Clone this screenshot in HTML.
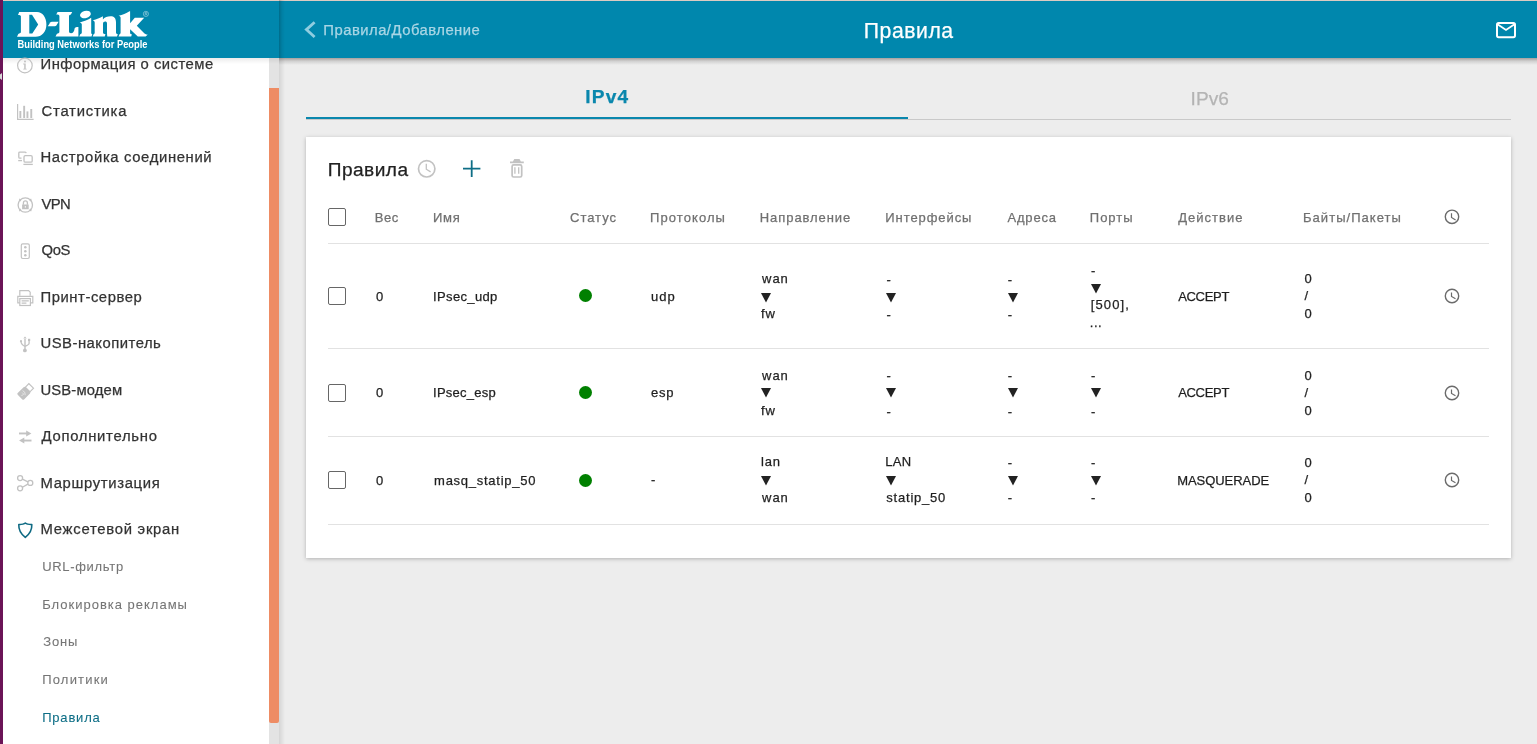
<!DOCTYPE html>
<html><head><meta charset="utf-8"><title>Правила</title>
<style>
html,body{margin:0;padding:0;}
body{width:1537px;height:744px;overflow:hidden;position:relative;background:#ededed;font-family:"Liberation Sans",sans-serif;}
.t{position:absolute;white-space:nowrap;line-height:1;-webkit-text-stroke:0.25px currentColor;}
.a{position:absolute;display:block;}
#purple{position:absolute;left:0;top:0;width:3px;height:744px;background:#6b1457;z-index:20;}
#notch{position:absolute;left:0;top:73px;width:2px;height:7px;background:#d9d9d9;clip-path:polygon(0 20%,100% 0,100% 100%,0 80%);z-index:21;}
#side{position:absolute;left:3px;top:0;width:276px;height:744px;background:#fff;}
#track{position:absolute;left:269px;top:58px;width:10px;height:686px;background:#e3e3e3;}
#thumb{position:absolute;left:269px;top:88px;width:10px;height:635px;background:#ee8c64;border-radius:0 0 2px 2px;}
#mainshadow{position:absolute;left:279px;top:58px;width:6px;height:686px;background:linear-gradient(to right,rgba(0,0,0,0.10),rgba(0,0,0,0));}
#hdr{position:absolute;left:3px;top:0;width:1534px;height:58px;background:#0087ad;z-index:10;}
#topline{position:absolute;left:3px;top:0;width:1534px;height:1px;background:#dccbc2;z-index:11;}
#hdrshadow{position:absolute;left:279px;top:0;width:6px;height:58px;background:linear-gradient(to right,rgba(0,0,0,0.2),rgba(0,0,0,0.06) 50%,rgba(0,0,0,0));z-index:11;}
#hdrbot{position:absolute;left:279px;top:58px;width:1258px;height:7px;background:linear-gradient(to bottom,rgba(40,22,16,0.36),rgba(0,0,0,0.12) 45%,rgba(0,0,0,0));z-index:9;}
#sidebot{position:absolute;left:3px;top:58px;width:276px;height:6px;background:linear-gradient(to bottom,rgba(0,0,0,0.08),rgba(0,0,0,0));z-index:9;}
#tabline{position:absolute;left:306px;top:119px;width:1205px;height:1px;background:#c9c9c9;}
#tabact{position:absolute;left:306px;top:117px;width:602px;height:2px;background:#0a87ad;}
#card{position:absolute;left:306px;top:137px;width:1205px;height:421px;background:#fff;box-shadow:0 1px 4px rgba(0,0,0,0.25);}
.hl{position:absolute;left:328px;width:1161px;height:1px;background:#e2e2e2;}
.cb{position:absolute;left:328px;width:16px;height:16px;border:1px solid #666;border-radius:2px;box-sizing:content-box;}
.dot{position:absolute;left:579px;width:13px;height:13px;border-radius:50%;background:#008000;}
</style></head><body>
<div id="side"></div>
<div id="track"></div>
<div id="thumb"></div>
<div id="mainshadow"></div>
<div id="hdr"></div>
<div id="topline"></div>
<div id="hdrshadow"></div>
<div id="hdrbot"></div>
<div id="sidebot"></div>
<div id="purple"></div>
<div id="notch"></div>
<div id="tabline"></div>
<div id="tabact"></div>
<div id="card"></div>
<div class="hl" style="top:243px"></div>
<div class="hl" style="top:348px"></div>
<div class="hl" style="top:436px"></div>
<div class="hl" style="top:524px"></div>
<div class="cb" style="top:208px"></div>
<div class="cb" style="top:287.0px"></div><div class="dot" style="top:289.40px"></div><svg class="a" style="left:1443px;top:286.9px" width="18" height="18" viewBox="0 0 18 18"><circle cx="9" cy="9" r="6.7" fill="none" stroke="#6b6b6b" stroke-width="1.4"/><path d="M8.5 5.4V9.4L12.5 11.8" fill="none" stroke="#6b6b6b" stroke-width="1.2"/></svg>
<div class="cb" style="top:384.0px"></div><div class="dot" style="top:385.80px"></div><svg class="a" style="left:1443px;top:383.9px" width="18" height="18" viewBox="0 0 18 18"><circle cx="9" cy="9" r="6.7" fill="none" stroke="#6b6b6b" stroke-width="1.4"/><path d="M8.5 5.4V9.4L12.5 11.8" fill="none" stroke="#6b6b6b" stroke-width="1.2"/></svg>
<div class="cb" style="top:471.0px"></div><div class="dot" style="top:473.90px"></div><svg class="a" style="left:1443px;top:471.0px" width="18" height="18" viewBox="0 0 18 18"><circle cx="9" cy="9" r="6.7" fill="none" stroke="#6b6b6b" stroke-width="1.4"/><path d="M8.5 5.4V9.4L12.5 11.8" fill="none" stroke="#6b6b6b" stroke-width="1.2"/></svg>
<svg class="a" style="left:761.0px;top:292.70px" width="11" height="11" viewBox="0 0 11 11"><path d="M0 0H10L5 9.6Z" fill="#222"/></svg>
<svg class="a" style="left:886.3px;top:292.70px" width="11" height="11" viewBox="0 0 11 11"><path d="M0 0H10L5 9.6Z" fill="#222"/></svg>
<svg class="a" style="left:1007.5px;top:292.70px" width="11" height="11" viewBox="0 0 11 11"><path d="M0 0H10L5 9.6Z" fill="#222"/></svg>
<svg class="a" style="left:1090.8px;top:283.93px" width="11" height="11" viewBox="0 0 11 11"><path d="M0 0H10L5 9.6Z" fill="#222"/></svg>
<svg class="a" style="left:761.0px;top:388.20px" width="11" height="11" viewBox="0 0 11 11"><path d="M0 0H10L5 9.6Z" fill="#222"/></svg>
<svg class="a" style="left:886.3px;top:388.20px" width="11" height="11" viewBox="0 0 11 11"><path d="M0 0H10L5 9.6Z" fill="#222"/></svg>
<svg class="a" style="left:1007.5px;top:388.20px" width="11" height="11" viewBox="0 0 11 11"><path d="M0 0H10L5 9.6Z" fill="#222"/></svg>
<svg class="a" style="left:1090.8px;top:388.20px" width="11" height="11" viewBox="0 0 11 11"><path d="M0 0H10L5 9.6Z" fill="#222"/></svg>
<svg class="a" style="left:761.0px;top:476.20px" width="11" height="11" viewBox="0 0 11 11"><path d="M0 0H10L5 9.6Z" fill="#222"/></svg>
<svg class="a" style="left:886.3px;top:476.20px" width="11" height="11" viewBox="0 0 11 11"><path d="M0 0H10L5 9.6Z" fill="#222"/></svg>
<svg class="a" style="left:1007.5px;top:476.20px" width="11" height="11" viewBox="0 0 11 11"><path d="M0 0H10L5 9.6Z" fill="#222"/></svg>
<svg class="a" style="left:1090.8px;top:476.20px" width="11" height="11" viewBox="0 0 11 11"><path d="M0 0H10L5 9.6Z" fill="#222"/></svg>
<svg class="a" style="left:0;top:0;z-index:13" width="1537" height="744" viewBox="0 0 1537 744">
<g fill="none" stroke="#c2c2c2" stroke-width="1.2">
  <circle cx="24.9" cy="65.5" r="7.3"/>
</g>
<g fill="#c2c2c2">
  <circle cx="25" cy="61.6" r="1.0"/>
  <path d="M23.2 63.6H25.7V68.7H26.7V69.6H23.2V68.7H24.2V64.5H23.2Z"/>
</g>
<g fill="none" stroke="#c2c2c2" stroke-width="1.2">
  <path d="M17.6 104V119.4H33.6"/>
</g>
<g fill="#c2c2c2">
  <rect x="19.4" y="111" width="1.9" height="7"/>
  <rect x="23.2" y="105.8" width="1.9" height="12.2"/>
  <rect x="26.5" y="111.4" width="1.9" height="6.6"/>
  <rect x="30.3" y="109" width="1.9" height="9"/>
</g>
<g fill="none" stroke="#c2c2c2" stroke-width="1.3">
  <path d="M21.5 158.2H19.8Q18.8 158.2 18.8 157.2V153Q18.8 152.2 19.8 152.2H25.2Q26 152.2 26.2 153.2"/>
  <path d="M18.2 160.6H22"/>
  <rect x="24.0" y="155.6" width="8.2" height="6.6" rx="1.3"/>
  <path d="M23.4 164.4H32.8"/>
</g>
<g fill="none" stroke="#c2c2c2" stroke-width="1.3">
  <circle cx="25.3" cy="205" r="7.2"/>
</g>
<g fill="#c2c2c2">
  <path d="M19.5 198.5L21.6 199.8L20.4 201.6L18.8 200.6Z"/>
  <path d="M31.1 198.5L29 199.8L30.2 201.6L31.8 200.6Z"/>
  <path d="M19.5 211.5L21.6 210.2L20.4 208.4L18.8 209.4Z"/>
  <path d="M31.1 211.5L29 210.2L30.2 208.4L31.8 209.4Z"/>
  <path d="M22.1 204.6H28.7V209.2H22.1Z M24.8 206.2V207.4H26V206.2Z" fill-rule="evenodd"/>
</g>
<path d="M23.4 204.8V203Q23.4 200.9 25.4 200.9Q27.4 200.9 27.4 203V204.8" fill="none" stroke="#c2c2c2" stroke-width="1.3"/>
<g fill="none" stroke="#c2c2c2" stroke-width="1.2">
  <rect x="21.3" y="243.9" width="8.0" height="14.6" rx="1.4"/>
</g>
<g fill="#c2c2c2">
  <circle cx="25.3" cy="247.2" r="1.25"/>
  <circle cx="25.3" cy="251.3" r="1.25"/>
  <circle cx="25.3" cy="255.3" r="1.25"/>
</g>
<g fill="none" stroke="#c2c2c2" stroke-width="1.2">
  <path d="M19.8 295.8V290.6H28.6L30.2 292.2V295.8"/>
  <path d="M19.8 302.8H17.8V296.3H32.8V302.8H30.4"/>
  <rect x="19.8" y="298.6" width="10.6" height="6.9"/>
  <path d="M21.6 300.9H28.8M21.6 303.2H26.4"/>
</g>
<g fill="#c2c2c2" stroke="none">
  <path d="M24.3 339H25.7V349.5H24.3Z"/>
  <path d="M23.3 338.6L25 336.6L26.7 338.6Z"/>
  <circle cx="24.9" cy="350.4" r="1.9"/>
  <circle cx="21" cy="341.2" r="1.1"/>
  <rect x="28" y="338.8" width="2.2" height="2.2"/>
</g>
<g fill="none" stroke="#c2c2c2" stroke-width="1.3">
  <path d="M21 341.5Q21 344.5 24.9 346.4"/>
  <path d="M29.1 340.5V343.2Q29.1 344.6 25 346.4"/>
</g>
<g transform="translate(0.9 0.6) rotate(-45 24.5 391)">
  <rect x="16.8" y="386.6" width="10.8" height="9.0" rx="1.2" fill="#c2c2c2"/>
  <rect x="27.6" y="387.8" width="5.0" height="6.6" fill="none" stroke="#c2c2c2" stroke-width="1.1"/>
</g>
<g fill="none" stroke="#fff" stroke-width="0.7" opacity="0.8">
  <path d="M22.2 392.6Q23.6 393.4 23.2 395"/>
  <path d="M22.6 390.6Q25.6 391.6 25.2 395.2"/>
</g>
<circle cx="22" cy="395.2" r="0.55" fill="#fff" opacity="0.8"/>
<g fill="#c2c2c2" stroke="none">
  <path d="M19 432.5H27V434.4H19Z"/><path d="M26.2 430.4L31.4 433.45L26.2 436.5Z"/>
  <path d="M23.5 439.6H31.5V441.5H23.5Z"/><path d="M24.3 437.5L19.1 440.55L24.3 443.6Z"/>
</g>
<g fill="none" stroke="#c2c2c2" stroke-width="1.3">
  <circle cx="20.1" cy="478.1" r="2.5"/>
  <circle cx="30.3" cy="482.9" r="2.5"/>
  <circle cx="20.1" cy="488.3" r="2.5"/>
  <path d="M22.4 479.2L27.9 481.8M22.4 487.2L27.9 484.1"/>
</g>
<path d="M25.3 523Q23.8 524.4 18.8 524.6Q18.4 532 25.3 537.4Q32.2 532 31.8 524.6Q26.8 524.4 25.3 523Z" fill="none" stroke="#0e6a83" stroke-width="1.6" stroke-linejoin="round"/>

<path d="M314.6 22.2L306.4 29.6L314.6 37" fill="none" stroke="#8fcde0" stroke-width="2.8"/>
<rect x="1497" y="23" width="18" height="14.2" rx="1.6" fill="none" stroke="#fff" stroke-width="2"/>
<path d="M1497.5 24.2L1506 30L1514.5 24.2" fill="none" stroke="#fff" stroke-width="1.8"/>

<circle cx="426.7" cy="168.8" r="8.2" fill="none" stroke="#c2c2c2" stroke-width="1.7"/>
<path d="M426.3 163.8V169.2L430.6 171.9" fill="none" stroke="#c2c2c2" stroke-width="1.3"/>
<path d="M463 168.6H480.4M471.7 160.2V177" fill="none" stroke="#0e6e86" stroke-width="1.8"/>
<path d="M510 163.3H523.8V161.4H520.9L519.5 159.0H514.3L512.9 161.4H510Z" fill="#c2c2c2"/>
<g fill="none" stroke="#c2c2c2" stroke-width="1.7">
  <rect x="512.1" y="164.9" width="9.6" height="12.1" rx="1.5"/>
</g>
<path d="M514.9 167.2V173.8M518.7 167.2V173.8" fill="none" stroke="#c2c2c2" stroke-width="1.3"/>
<circle cx="1452" cy="216.8" r="6.7" fill="none" stroke="#6b6b6b" stroke-width="1.4"/>
<path d="M1451.5 213.2V217.4L1455.6 220" fill="none" stroke="#6b6b6b" stroke-width="1.2"/>

<g fill="#fff">
<path fill-rule="evenodd" d="M18.0,14.9 L19.2,12.1 H37.0 C42.5,12.1 46.4,17.5 46.4,24.4 C46.4,31.5 42,36.7 35.5,36.7 H17.0 L18.3,34.0 C19.2,33.3 20.9,33.2 20.9,32.2 V16.2 C20.9,15.2 19.5,14.9 18.0,14.9 Z M29.3,14.8 H32.0 L38.2,24.4 L32.3,33.4 H29.3 Z"/>
<path d="M47.8,26.2 L50.2,22.4 C50.6,21.9 51.2,21.7 52,21.7 H58.6 L56.4,25.5 C56,26 55.5,26.2 54.8,26.2 Z"/>
<path d="M56.2,14.6 L57.6,12.1 H72.2 L70.9,14.6 C70,15 69,15.3 69,16.2 V31.5 C69,32.6 69.8,33.2 71,33.2 C73,33.2 74.2,31.5 74.7,28.2 C75,27.2 76.5,26.9 78.4,26.9 V36.6 H55.5 L56.8,34 C57.8,33.2 59.4,33.2 59.4,32 V16.2 C59.4,15 58,14.6 56.2,14.6 Z"/>
<ellipse cx="85.4" cy="14.5" rx="5.5" ry="3.6" transform="rotate(-14 85.4 14.5)"/>
<path d="M79.6,22.4 C84,21.4 88,19.8 91.2,17.8 V32.8 C91.2,33.8 91.8,34.1 92.3,34.2 L91.5,36.6 H79.3 L80.2,34.3 C81.2,33.9 81.8,33.5 81.8,32.5 V24.3 C81.8,23.3 80.8,22.7 79.6,22.4 Z"/>
<path d="M92.9,20.3 C96.5,19.5 100,18 102.9,16.3 V19.5 C104.5,17.4 107.5,16.3 110.5,16.3 C114,16.3 116,18.2 116,22.5 V32.5 C116,33.5 117,34 117.8,34.2 L117,36.6 H107.3 C107.3,35.5 107,34.5 107,33 V23.5 C107,22.2 106.2,21.6 105.2,21.6 C104,21.6 103,22.5 103,23.8 V32.5 C103,33.5 104,34 105.5,34.3 L104.7,36.6 H92.7 L93.6,34.3 C94.4,33.9 94.7,33.5 94.7,32.5 V22.8 C94.7,21.5 94,20.7 92.9,20.3 Z"/>
<path d="M118.6,15.7 C122.5,14.8 126.2,13.2 129.5,11.2 H130.1 V23.2 L134.8,17.8 H144.2 L136.8,25.8 L144.5,33.6 C145.6,34.5 146.8,34.8 147.9,34.6 L145.6,36.6 H137.8 L130.1,29.2 V33 C130.1,33.8 131,34.2 131.9,34.3 L131.2,36.6 H118.6 L119.5,34.3 C120.2,34 120.6,33.5 120.6,32.8 V17.8 C120.6,16.6 119.8,16 118.6,15.7 Z"/>
</g>
<circle cx="145.9" cy="13.9" r="2.6" fill="none" stroke="#cfe6ee" stroke-width="0.5"/>
<path d="M145.2 15.3V12.5H146.3Q147 12.5 147 13.2Q147 13.9 146.3 13.9H145.2M146.2 13.9L147 15.3" fill="none" stroke="#cfe6ee" stroke-width="0.45"/>
<text x="17.5" y="47.6" font-family="Liberation Sans" font-weight="bold" font-size="10.2" textLength="130" lengthAdjust="spacingAndGlyphs" fill="#fff">Building Networks for People</text>
</svg>
<div id="texts" style="position:absolute;left:0;top:0;width:1537px;height:744px;z-index:12;will-change:transform">
<span class="t" style="left:40.50px;top:57.34px;font-size:14.84px;color:#333333;letter-spacing:0.472px">Информация о системе</span>
<span class="t" style="left:41.50px;top:103.84px;font-size:14.84px;color:#333333;letter-spacing:0.787px">Статистика</span>
<span class="t" style="left:40.50px;top:150.34px;font-size:14.84px;color:#333333;letter-spacing:0.639px">Настройка соединений</span>
<span class="t" style="left:41.50px;top:196.84px;font-size:14.84px;color:#333333;letter-spacing:-0.666px">VPN</span>
<span class="t" style="left:41.50px;top:243.34px;font-size:14.84px;color:#333333;letter-spacing:-0.400px">QoS</span>
<span class="t" style="left:40.50px;top:289.84px;font-size:14.84px;color:#333333;letter-spacing:0.550px">Принт-сервер</span>
<span class="t" style="left:40.50px;top:336.34px;font-size:14.84px;color:#333333;letter-spacing:0.495px">USB-накопитель</span>
<span class="t" style="left:40.50px;top:382.84px;font-size:14.84px;color:#333333;letter-spacing:0.126px">USB-модем</span>
<span class="t" style="left:41.50px;top:429.34px;font-size:14.84px;color:#333333;letter-spacing:0.722px">Дополнительно</span>
<span class="t" style="left:40.50px;top:475.84px;font-size:14.84px;color:#333333;letter-spacing:0.656px">Маршрутизация</span>
<span class="t" style="left:40.50px;top:522.34px;font-size:14.84px;color:#333333;letter-spacing:0.741px">Межсетевой экран</span>
<span class="t" style="left:42.20px;top:559.90px;font-size:13.0px;color:#757575;letter-spacing:0.679px;-webkit-text-stroke:0.08px currentColor">URL-фильтр</span>
<span class="t" style="left:42.20px;top:597.65px;font-size:13.0px;color:#757575;letter-spacing:0.993px;-webkit-text-stroke:0.08px currentColor">Блокировка рекламы</span>
<span class="t" style="left:43.20px;top:635.40px;font-size:13.0px;color:#757575;letter-spacing:0.862px;-webkit-text-stroke:0.08px currentColor">Зоны</span>
<span class="t" style="left:42.20px;top:673.15px;font-size:13.0px;color:#757575;letter-spacing:1.189px;-webkit-text-stroke:0.08px currentColor">Политики</span>
<span class="t" style="left:42.20px;top:710.90px;font-size:13.0px;color:#0e6e86;letter-spacing:0.799px;-webkit-text-stroke:0.08px currentColor">Правила</span>
<span class="t" style="left:323.30px;top:22.94px;font-size:14.84px;color:#a9d6e5;letter-spacing:0.480px">Правила/Добавление</span>
<span class="t" style="left:863.80px;top:19.85px;font-size:21.2px;color:#ffffff;letter-spacing:0.540px">Правила</span>
</div>
<div id="texts2" style="position:absolute;left:0;top:0;z-index:12">
<span class="t" style="left:585.30px;top:86.75px;font-size:19.08px;color:#0a87ad;letter-spacing:1.225px;font-weight:bold">IPv4</span>
<span class="t" style="left:1190.60px;top:88.65px;font-size:19.08px;color:#b4b4b4;letter-spacing:0.023px">IPv6</span>
<span class="t" style="left:327.70px;top:159.55px;font-size:19.08px;color:#222222;letter-spacing:0.481px">Правила</span>
<span class="t" style="left:374.70px;top:210.90px;font-size:13.0px;color:#707070;letter-spacing:0.554px">Вес</span>
<span class="t" style="left:433.10px;top:210.90px;font-size:13.0px;color:#707070;letter-spacing:0.677px">Имя</span>
<span class="t" style="left:570.00px;top:210.90px;font-size:13.0px;color:#707070;letter-spacing:0.989px">Статус</span>
<span class="t" style="left:650.10px;top:210.90px;font-size:13.0px;color:#707070;letter-spacing:1.069px">Протоколы</span>
<span class="t" style="left:759.80px;top:210.90px;font-size:13.0px;color:#707070;letter-spacing:0.924px">Направление</span>
<span class="t" style="left:885.30px;top:210.90px;font-size:13.0px;color:#707070;letter-spacing:0.920px">Интерфейсы</span>
<span class="t" style="left:1007.50px;top:210.90px;font-size:13.0px;color:#707070;letter-spacing:0.800px">Адреса</span>
<span class="t" style="left:1089.80px;top:210.90px;font-size:13.0px;color:#707070;letter-spacing:1.000px">Порты</span>
<span class="t" style="left:1178.20px;top:210.90px;font-size:13.0px;color:#707070;letter-spacing:1.035px">Действие</span>
<span class="t" style="left:1303.00px;top:210.90px;font-size:13.0px;color:#707070;letter-spacing:1.045px">Байты/Пакеты</span>
<span class="t" style="left:376.00px;top:289.60px;font-size:13.0px;color:#1f1f1f;letter-spacing:1.041px">0</span>
<span class="t" style="left:433.10px;top:289.60px;font-size:13.0px;color:#1f1f1f;letter-spacing:0.353px">IPsec_udp</span>
<span class="t" style="left:651.10px;top:289.60px;font-size:13.0px;color:#1f1f1f;letter-spacing:1.018px">udp</span>
<span class="t" style="left:1178.20px;top:289.60px;font-size:13.0px;color:#1f1f1f;letter-spacing:-0.319px">ACCEPT</span>
<span class="t" style="left:762.00px;top:271.85px;font-size:13.0px;color:#1f1f1f;letter-spacing:0.997px">wan</span>
<span class="t" style="left:761.00px;top:306.95px;font-size:13.0px;color:#1f1f1f;letter-spacing:0.990px">fw</span>
<span class="t" style="left:886.60px;top:272.65px;font-size:13.0px;color:#1f1f1f;letter-spacing:0.362px">-</span>
<span class="t" style="left:886.60px;top:307.75px;font-size:13.0px;color:#1f1f1f;letter-spacing:0.362px">-</span>
<span class="t" style="left:1007.80px;top:272.65px;font-size:13.0px;color:#1f1f1f;letter-spacing:0.362px">-</span>
<span class="t" style="left:1007.80px;top:307.75px;font-size:13.0px;color:#1f1f1f;letter-spacing:0.362px">-</span>
<span class="t" style="left:1091.10px;top:263.87px;font-size:13.0px;color:#1f1f1f;letter-spacing:0.362px">-</span>
<span class="t" style="left:1090.80px;top:298.17px;font-size:13.0px;color:#1f1f1f;letter-spacing:1.094px">[500],</span>
<span class="t" style="left:1089.80px;top:315.72px;font-size:13.0px;color:#1f1f1f;letter-spacing:0.521px">...</span>
<span class="t" style="left:1304.50px;top:271.85px;font-size:13.0px;color:#1f1f1f;letter-spacing:1.041px">0</span>
<span class="t" style="left:1304.50px;top:289.40px;font-size:13.0px;color:#1f1f1f;letter-spacing:0.768px">/</span>
<span class="t" style="left:1304.50px;top:306.95px;font-size:13.0px;color:#1f1f1f;letter-spacing:1.041px">0</span>
<span class="t" style="left:376.00px;top:385.60px;font-size:13.0px;color:#1f1f1f;letter-spacing:1.041px">0</span>
<span class="t" style="left:433.10px;top:385.60px;font-size:13.0px;color:#1f1f1f;letter-spacing:0.243px">IPsec_esp</span>
<span class="t" style="left:651.10px;top:385.60px;font-size:13.0px;color:#1f1f1f;letter-spacing:0.688px">esp</span>
<span class="t" style="left:1178.20px;top:385.60px;font-size:13.0px;color:#1f1f1f;letter-spacing:-0.319px">ACCEPT</span>
<span class="t" style="left:762.00px;top:368.65px;font-size:13.0px;color:#1f1f1f;letter-spacing:0.997px">wan</span>
<span class="t" style="left:761.00px;top:403.75px;font-size:13.0px;color:#1f1f1f;letter-spacing:0.990px">fw</span>
<span class="t" style="left:886.60px;top:369.45px;font-size:13.0px;color:#1f1f1f;letter-spacing:0.362px">-</span>
<span class="t" style="left:886.60px;top:404.55px;font-size:13.0px;color:#1f1f1f;letter-spacing:0.362px">-</span>
<span class="t" style="left:1007.80px;top:369.45px;font-size:13.0px;color:#1f1f1f;letter-spacing:0.362px">-</span>
<span class="t" style="left:1007.80px;top:404.55px;font-size:13.0px;color:#1f1f1f;letter-spacing:0.362px">-</span>
<span class="t" style="left:1091.10px;top:369.45px;font-size:13.0px;color:#1f1f1f;letter-spacing:0.362px">-</span>
<span class="t" style="left:1091.10px;top:404.55px;font-size:13.0px;color:#1f1f1f;letter-spacing:0.362px">-</span>
<span class="t" style="left:1304.50px;top:368.65px;font-size:13.0px;color:#1f1f1f;letter-spacing:1.041px">0</span>
<span class="t" style="left:1304.50px;top:386.20px;font-size:13.0px;color:#1f1f1f;letter-spacing:0.768px">/</span>
<span class="t" style="left:1304.50px;top:403.75px;font-size:13.0px;color:#1f1f1f;letter-spacing:1.041px">0</span>
<span class="t" style="left:376.00px;top:473.90px;font-size:13.0px;color:#1f1f1f;letter-spacing:1.041px">0</span>
<span class="t" style="left:434.10px;top:473.90px;font-size:13.0px;color:#1f1f1f;letter-spacing:0.730px">masq_statip_50</span>
<span class="t" style="left:651.10px;top:473.30px;font-size:13.0px;color:#1f1f1f;letter-spacing:0.362px">-</span>
<span class="t" style="left:1177.20px;top:473.90px;font-size:13.0px;color:#1f1f1f;letter-spacing:-0.051px">MASQUERADE</span>
<span class="t" style="left:761.00px;top:455.45px;font-size:13.0px;color:#1f1f1f;letter-spacing:0.823px">lan</span>
<span class="t" style="left:762.00px;top:490.55px;font-size:13.0px;color:#1f1f1f;letter-spacing:0.997px">wan</span>
<span class="t" style="left:885.30px;top:455.45px;font-size:13.0px;color:#1f1f1f;letter-spacing:0.290px">LAN</span>
<span class="t" style="left:886.30px;top:490.55px;font-size:13.0px;color:#1f1f1f;letter-spacing:0.786px">statip_50</span>
<span class="t" style="left:1007.80px;top:456.25px;font-size:13.0px;color:#1f1f1f;letter-spacing:0.362px">-</span>
<span class="t" style="left:1007.80px;top:491.35px;font-size:13.0px;color:#1f1f1f;letter-spacing:0.362px">-</span>
<span class="t" style="left:1091.10px;top:456.25px;font-size:13.0px;color:#1f1f1f;letter-spacing:0.362px">-</span>
<span class="t" style="left:1091.10px;top:491.35px;font-size:13.0px;color:#1f1f1f;letter-spacing:0.362px">-</span>
<span class="t" style="left:1304.50px;top:455.85px;font-size:13.0px;color:#1f1f1f;letter-spacing:1.041px">0</span>
<span class="t" style="left:1304.50px;top:473.40px;font-size:13.0px;color:#1f1f1f;letter-spacing:0.768px">/</span>
<span class="t" style="left:1304.50px;top:490.95px;font-size:13.0px;color:#1f1f1f;letter-spacing:1.041px">0</span>
</div>
</body></html>
